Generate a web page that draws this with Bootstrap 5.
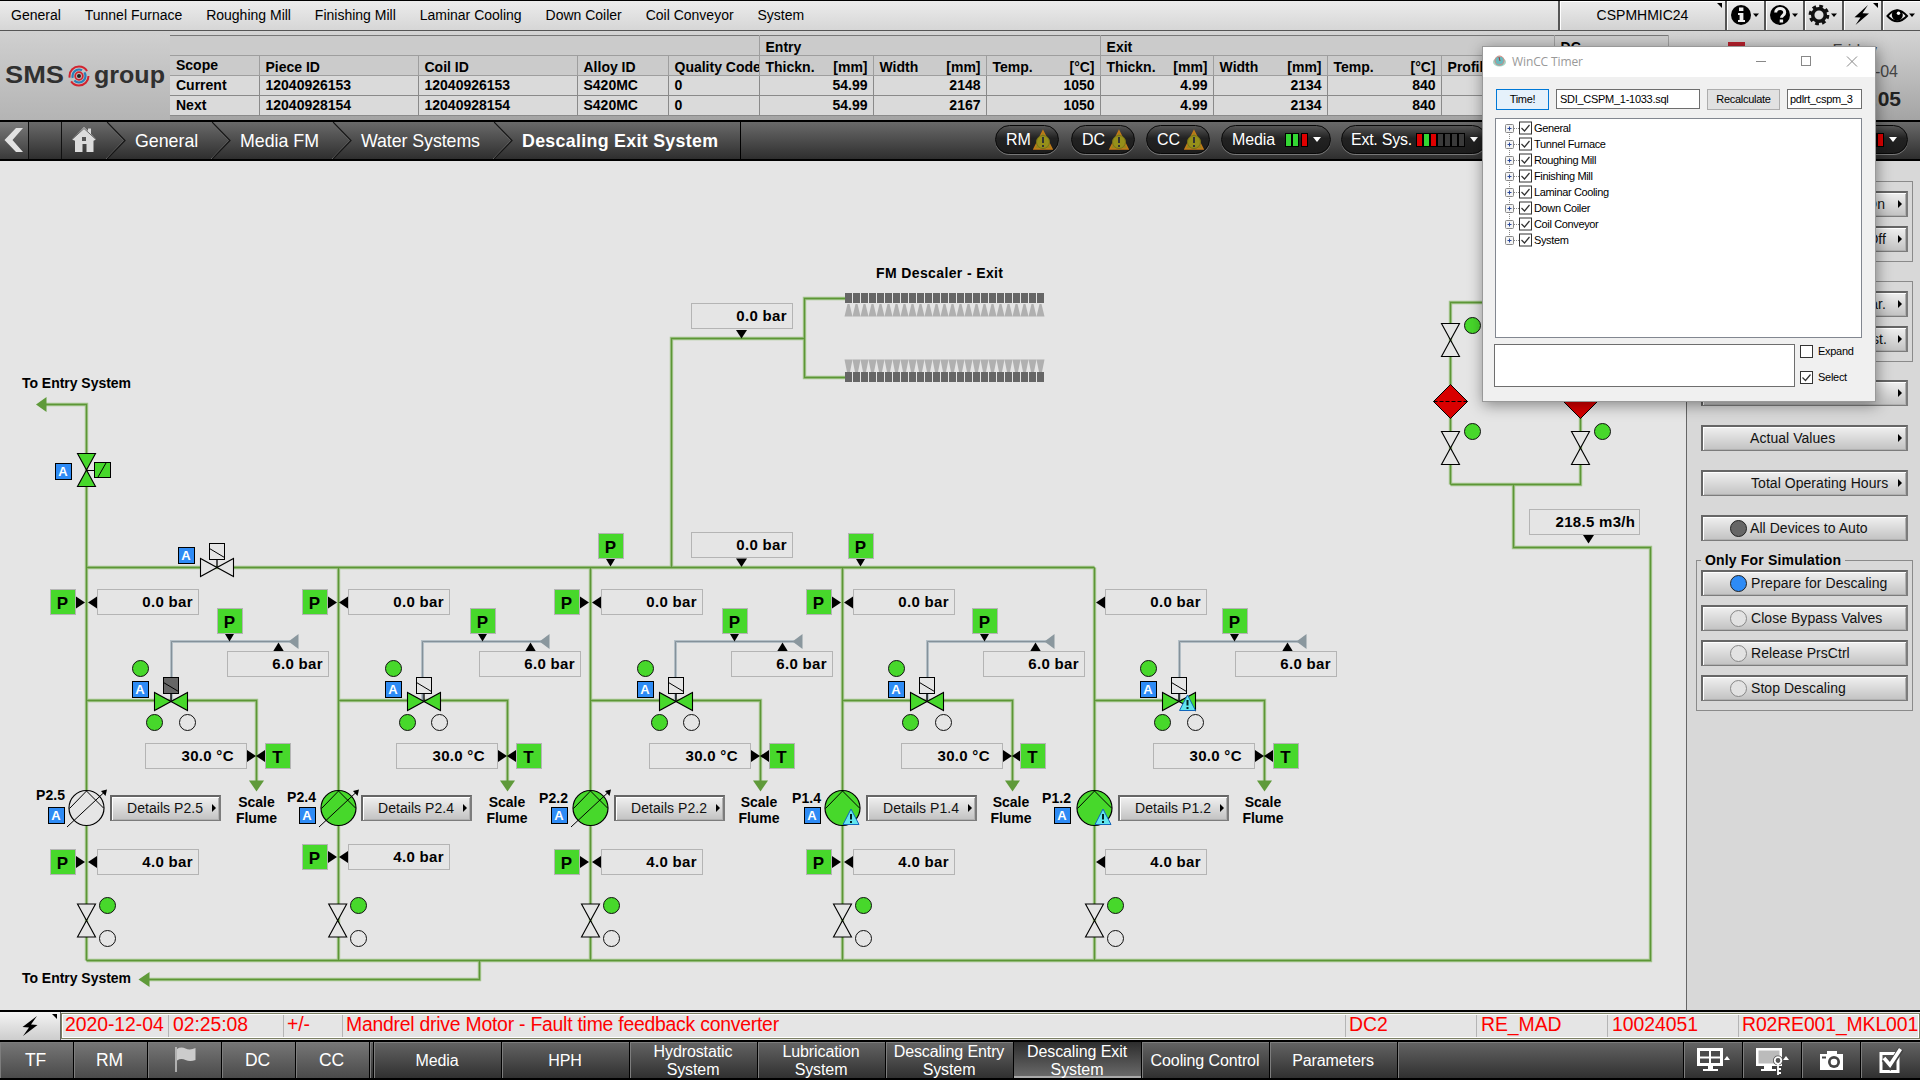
<!DOCTYPE html>
<html lang="en">
<head>
<meta charset="utf-8">
<title>Descaling Exit System</title>
<link href="https://cdn.jsdelivr.net/npm/bootstrap@5.3.0/dist/css/bootstrap.min.css" rel="stylesheet">
<style>
body{font-family:"Liberation Sans",Arial,sans-serif;font-size:14px;line-height:1;color:#000;background:#e5e5e5;cursor:default}
svg{display:block}
button{font-family:inherit}
.screen{width:1920px;height:1080px}
/* menu */
.menubar{height:31px;background:linear-gradient(#ececec,#d6d6d6);border-top:1px solid #000;border-bottom:1px solid #555}
.menubar .entries{padding:0 0 1px 11px;gap:23.9px}
.tool-cell{width:39px;border-left:2px solid #555;background:linear-gradient(#ececec,#d2d2d2);box-shadow:inset 1px 1px #fff}
.tool-cell.host{width:167px;padding-bottom:1px;letter-spacing:0}
.fold{top:2px;right:3px}
/* header */
.headband{height:89px;background:linear-gradient(#d4d4d4,#a4a4a4)}
.logo-box{width:170px;background:linear-gradient(#d0d0d0,#b4b4b4)}
.pdata{width:1498px;height:80px;margin-top:4px;table-layout:fixed;border-collapse:collapse;font-weight:700;background:#dadada}
.pdata td,.pdata th{height:20px;padding:0 5px 1px 6px;border:1px solid #8a8a8a;line-height:16px;white-space:nowrap;overflow:hidden;vertical-align:middle}
.pdata th{background:#cbcbcb;border-color:#9e9e9e;padding-top:3px;padding-bottom:0}
.pdata th.scope{padding-top:0;padding-bottom:1px}
.pdata tr:first-child th{border-top:1px solid #777}
.pdata td:first-child,.pdata th:first-child{border-left:0}
.clock{color:#444;font-size:16px;padding:12px 19px 0 0}
.clock .time{font-size:21px;color:#222}
.alert-mark{left:1728px;top:42px;width:17px;height:10px;background:#b5202c}
/* breadcrumb */
.crumbs{height:41px;background:linear-gradient(#6a6a6a,#2e2e2e);border-top:2px solid #000;border-bottom:2px solid #000;color:#fff}
.crumbs .back{width:29px;border-right:1px solid #111;background:linear-gradient(#7a7a7a,#3a3a3a)}
.crumbs .slot{width:33px;border-right:1px solid #111}
.crumbs .trail{width:679px;border-right:1px solid #000;font-size:17.8px}
.pill{height:29px;border:1.5px solid #080808;border-radius:15px;background:linear-gradient(#555,#222 45%,#1c1c1c);box-shadow:0 1px #777;font-size:16px;letter-spacing:-.1px}
.led{flex-shrink:0;width:7px;height:14px;border:1px solid #000;background:#333}
.led.off{border-color:#000;background:#3a3a3a}
.led.g{background:#33d633}.led.r{background:#e00000}
.caret{width:0;height:0;border:4px solid transparent;border-top:5px solid #fff;border-bottom:0}
/* workspace */
.process{width:1686px}
.process text{font-family:"Liberation Sans",Arial,sans-serif;font-weight:700;font-size:14px}
.process .num{font-size:15px;letter-spacing:.3px;text-anchor:end}
.hmi-btn{height:26px;border:1px solid #7c7c7c;border-top:2px solid #666;border-left:2px solid #666;border-right-width:2px;background:linear-gradient(#f0f0f0,#c2c2c2);box-shadow:inset 1px 1px #fff,inset -1px -1px #b0b0b0;font-size:14px;padding:0 0 1px;color:#111;letter-spacing:.05px}
.hmi-btn .go{width:0;height:0;border:4.5px solid transparent;border-left:4px solid #000;border-right:0}
.details{width:111px}
.side{width:234px;background:#d8d8d8;border-left:1px solid #666;padding:20px 7px 0 9px}
.grp{border:1px solid #8a8a8a;padding:9px 4px;position:relative;display:flex;flex-direction:column;gap:9px}
.grp .cap{top:-9px;left:4px;background:#d8d8d8;padding:0 4px;font-weight:700;letter-spacing:.17px;line-height:17px}
.solo{margin:0 5px 19px}
.bulb{width:17px;height:17px;border-radius:50%;border:1px solid #888;background:#e2e2e2;margin:0 4px 0 27px}
.lead-txt{padding-left:47px}
/* window */
.win{left:1482px;top:46px;width:394px;height:356px;background:#f0f0f0;border:1px solid #999;box-shadow:1px 3px 14px rgba(0,0,0,.42);font-size:11px;letter-spacing:-.28px}
.win .bar{height:30px;background:#fff;font-family:"Open Sans","Noto Sans",sans-serif;font-size:12px;color:#999;letter-spacing:0}
.win .fld{border:1px solid #6e6e6e;background:#fff;height:20px;padding-left:3px}
.win .b{border:1px solid #adadad;background:#e1e1e1;height:21px}
.win .b.on{border:1px solid #0078d7;background:#e5f1fb}
.tree{width:367px;height:220px;margin:8px 0 0 12px;background:#fff;border:1px solid #828790;padding:1px 0 0 9px}
.tree .node{height:16px;line-height:16px;letter-spacing:-.36px}
/* alarm + footer */
.alarm{height:30px;background:#e5e5e5;border-top:2px solid #000;color:#f00;font-size:19.4px;letter-spacing:-.05px}
.alarm .bolt{width:61px;background:linear-gradient(#f4f4f4,#cdcdcd);border-right:1px solid #666}
.alarm .row-box{border:1px solid #7b7f63;outline:1px solid #fff;outline-offset:-2px;margin-top:1px;height:26px}
.alarm .c{border-right:1px solid #b5b5b5;padding-left:4px;white-space:nowrap;overflow:hidden;line-height:21px}
.alarm .msg{letter-spacing:-.24px;padding-left:3px}
.foot{height:40px;background:linear-gradient(#646464,#303030);border-top:2px solid #000;border-bottom:2px solid #000;color:#fff;font-size:16px;line-height:17.5px}
.foot .t{border-right:1px solid #000;box-shadow:inset 1px 1px #7d7d7d;text-align:center;white-space:nowrap;letter-spacing:-.1px;padding:1px 1px 0 0}
.foot .area{width:74px;font-size:17.5px;background:linear-gradient(#777,#4a4a4a);padding:2px 2px 0 0}
.foot .page{width:128px}
.foot .sys{width:59px}
.foot .now{background:linear-gradient(#2d2d2d,#6c6c6c);box-shadow:inset 0 -2px #aaa}
</style>
<script src="https://cdn.jsdelivr.net/npm/bootstrap@5.3.0/dist/js/bootstrap.bundle.min.js"></script>
</head>
<body class="overflow-hidden">
<div class="screen d-flex flex-column position-relative overflow-hidden">

<nav class="menubar d-flex flex-shrink-0">
  <div class="entries d-flex align-items-center flex-grow-1"><span>General</span><span>Tunnel Furnace</span><span>Roughing Mill</span><span>Finishing Mill</span><span>Laminar Cooling</span><span>Down Coiler</span><span>Coil Conveyor</span><span>System</span></div>
  <div class="tool-cell host d-flex align-items-center justify-content-center position-relative">CSPMHMIC24<svg class="fold position-absolute" width="5" height="5"><path d="M0 0H5V5Z"/></svg></div>
  <div class="tool-cell"><svg width="37" height="29"><circle cx="14" cy="14" r="10"/><path d="M12 6.500h4.400v3.600H12zM11 12h5.400v7H18v2h-7v-2h1.600v-5H11z" fill="#eee"/><path d="M26 12.500h6l-3 3.500z"/></svg></div>
  <div class="tool-cell"><svg width="37" height="29"><circle cx="14" cy="14" r="10"/><path d="M9.700 11.500c0-5.500 9-5.500 9 0 0 3-3.200 2.800-3.200 5.300" fill="none" stroke="#eee" stroke-width="3"/><rect x="13.700" y="18.500" width="3.400" height="3" fill="#eee"/><path d="M26 12.500h6l-3 3.500z"/></svg></div>
  <div class="tool-cell"><svg width="37" height="29"><circle cx="14" cy="14" r="8.600" fill="none" stroke="#111" stroke-width="3.500" stroke-dasharray="3.600 3.150"/><circle cx="14" cy="14" r="6.300" fill="none" stroke="#111" stroke-width="3.500"/><path d="M26 12.500h6l-3 3.500z"/></svg></div>
  <div class="tool-cell position-relative"><svg width="37" height="29"><path d="M24 4L10.500 16.200l6 .3L11.500 24 25 12.500l-6.500-.3z"/></svg><svg class="fold position-absolute" width="5" height="5"><path d="M0 0H5V5Z"/></svg></div>
  <div class="tool-cell"><svg width="37" height="29"><path d="M4.500 15q9.500-11.500 19.500 0-10 10.500-19.500 0z" fill="#eee" stroke="#000" stroke-width="2"/><circle cx="14.300" cy="14" r="5.500"/><circle cx="15.500" cy="12.300" r="1.700" fill="#fff"/><path d="M26 12.500h6l-3 3.500z"/></svg></div>
</nav>

<header class="headband d-flex flex-shrink-0">
  <div class="logo-box flex-shrink-0"><svg width="170" height="89" font-family="Liberation Sans" font-weight="700" fill="#303030"><text x="5" y="52" font-size="23.500" textLength="59" lengthAdjust="spacingAndGlyphs">SMS</text><text x="94" y="52" font-size="23.500" textLength="71" lengthAdjust="spacingAndGlyphs">group</text>
  <g fill="none"><circle cx="79" cy="45" r="9.500" stroke="#d2232f" stroke-width="2" stroke-dasharray="24 4 26 6"/><circle cx="79" cy="45" r="6.500" stroke="#2a80b9" stroke-width="2.200" stroke-dasharray="15 3"/><circle cx="79" cy="45" r="3.800" stroke="#d2232f" stroke-width="1.800"/></g><circle cx="79" cy="45" r="2" fill="#222"/></svg></div>
  <table class="pdata flex-shrink-0">
    <colgroup><col style="width:89px"><col style="width:159px"><col style="width:159px"><col style="width:91px"><col style="width:91px"><col style="width:114px"><col style="width:113px"><col style="width:114px"><col style="width:113px"><col style="width:114px"><col style="width:114px"><col style="width:113px"><col style="width:114px"></colgroup>
    <tr><th colspan="5"></th><th colspan="3">Entry</th><th colspan="4">Exit</th><th>DC</th></tr>
    <tr><th class="scope">Scope</th><th>Piece ID</th><th>Coil ID</th><th>Alloy ID</th><th>Quality Code</th>
      <th><div class="d-flex justify-content-between"><span>Thickn.</span><span>[mm]</span></div></th><th><div class="d-flex justify-content-between"><span>Width</span><span>[mm]</span></div></th><th><div class="d-flex justify-content-between"><span>Temp.</span><span>[°C]</span></div></th>
      <th><div class="d-flex justify-content-between"><span>Thickn.</span><span>[mm]</span></div></th><th><div class="d-flex justify-content-between"><span>Width</span><span>[mm]</span></div></th><th><div class="d-flex justify-content-between"><span>Temp.</span><span>[°C]</span></div></th><th>Profile</th><th></th></tr>
    <tr><td>Current</td><td>12040926153</td><td>12040926153</td><td>S420MC</td><td>0</td><td class="text-end">54.99</td><td class="text-end">2148</td><td class="text-end">1050</td><td class="text-end">4.99</td><td class="text-end">2134</td><td class="text-end">840</td><td></td><td></td></tr>
    <tr><td>Next</td><td>12040928154</td><td>12040928154</td><td>S420MC</td><td>0</td><td class="text-end">54.99</td><td class="text-end">2167</td><td class="text-end">1050</td><td class="text-end">4.99</td><td class="text-end">2134</td><td class="text-end">840</td><td></td><td></td></tr>
  </table>
  <div class="clock flex-grow-1 text-end"><div class="alert-mark position-absolute"></div><div class="pe-4">Friday</div><div style="padding:5px 3px 0 0">2020-12-04</div><div class="time fw-bold mt-2">02:25:05</div></div>
</header>

<div class="crumbs d-flex flex-shrink-0">
  <div class="back"><svg width="29" height="37"><path d="M16 6h7L12.500 18 23 30h-7L4.500 18z" fill="#e2e2e2"/></svg></div>
  <div class="slot"></div>
  <div class="trail"><svg width="678" height="37" fill="#fff"><path d="M10 17.500L22 5l4 4V6.500h3V12l5 5.500-2.500 1.200V30h-7v-8h-4v8H13V18.800z" fill="#dcdcdc"/><path d="M10 17.500L22 6.500 34 17.500" fill="none" stroke="#666"/><rect x="20" y="15" width="4" height="4" fill="#555"/>
    <g fill="none" stroke="#777"><path d="M44 0L62 18.500 44 37M149 0l18 18.500L149 37M270 0l18 18.500L270 37M431 0l18 18.500L431 37"/></g>
    <g fill="none" stroke="#151515" stroke-width="1.200"><path d="M45 0L63 18.500 45 37M150 0l18 18.500L150 37M271 0l18 18.500L271 37M432 0l18 18.500L432 37"/></g>
    <text x="73" y="25">General</text><text x="178" y="25">Media FM</text><text x="299" y="25" textLength="119">Water Systems</text><text x="460" y="25" font-weight="700" textLength="196">Descaling Exit System</text></svg></div>
  <div class="d-flex flex-grow-1 ps-0" style="padding:3px 12px 0 0">
    <div class="pill d-flex align-items-center warnpill" style="margin-left:254px;width:64px">RM</div>
    <div class="pill d-flex align-items-center warnpill" style="margin-left:12px;width:64px">DC</div>
    <div class="pill d-flex align-items-center warnpill" style="margin-left:11px;width:64px">CC</div>
    <div class="pill d-flex align-items-center" style="margin-left:11px;width:110px;padding-left:10px"><span class="me-auto">Media</span><i class="led g"></i><i class="led g"></i><i class="led r" style="margin-left:2px"></i><i class="caret" style="margin:0 9px 0 5px"></i></div>
    <div class="pill d-flex align-items-center" style="margin-left:10px;width:146px;padding-left:9px;letter-spacing:-.25px"><span class="me-auto">Ext. Sys.</span><i class="led r"></i><i class="led g"></i><i class="led r"></i><i class="led off"></i><i class="led off"></i><i class="led off"></i><i class="led off"></i><i class="caret" style="margin:0 8px 0 5px"></i></div>
    <div class="pill d-flex align-items-center ms-auto" style="width:120px"><i class="led r ms-auto"></i><i class="led r"></i><i class="led r"></i><i class="caret" style="margin:0 10px 0 5px"></i></div>
  </div>
</div>

<main class="d-flex flex-grow-1">
  <section class="process position-relative" id="process"></section>
  <aside class="side">
    <div class="grp" style="margin-bottom:19px">
      <button class="hmi-btn d-flex align-items-center"><span class="ms-auto" style="margin-right:13px">On</span><i class="go me-1"></i></button>
      <button class="hmi-btn d-flex align-items-center"><span class="ms-auto" style="margin-right:12px">Off</span><i class="go me-1"></i></button>
    </div>
    <div class="grp" style="margin-bottom:18px">
      <button class="hmi-btn d-flex align-items-center"><span class="ms-auto" style="margin-right:12px">Par.</span><i class="go me-1"></i></button>
      <button class="hmi-btn d-flex align-items-center"><span class="ms-auto" style="margin-right:11px">Est.</span><i class="go me-1"></i></button>
    </div>
    <div class="solo"><button class="hmi-btn w-100 d-flex align-items-center"><i class="go ms-auto me-1"></i></button></div>
    <div class="solo"><button class="hmi-btn w-100 d-flex align-items-center lead-txt">Actual Values<i class="go ms-auto me-1"></i></button></div>
    <div class="solo"><button class="hmi-btn w-100 d-flex align-items-center lead-txt"><span style="margin-left:1px">Total Operating Hours</span><i class="go ms-auto me-1"></i></button></div>
    <div class="solo"><button class="hmi-btn w-100 d-flex align-items-center"><i class="bulb" style="background:#666;border-color:#222;margin-right:3px"></i>All Devices to Auto</button></div>
    <div class="grp"><div class="cap position-absolute">Only For Simulation</div>
      <button class="hmi-btn d-flex align-items-center"><i class="bulb" style="background:#2e8bf5;border-color:#222"></i>Prepare for Descaling</button>
      <button class="hmi-btn d-flex align-items-center"><i class="bulb"></i>Close Bypass Valves</button>
      <button class="hmi-btn d-flex align-items-center"><i class="bulb"></i>Release PrsCtrl</button>
      <button class="hmi-btn d-flex align-items-center"><i class="bulb"></i>Stop Descaling</button>
    </div>
  </aside>
</main>

<div class="alarm d-flex flex-shrink-0">
  <div class="bolt position-relative"><svg width="60" height="28"><path d="M37 4L22.500 15l6.500.5L23 24l14.500-11-6.500-.5z"/></svg><svg class="fold position-absolute" width="5" height="5"><path d="M0 0H5V5Z"/></svg></div>
  <div class="row-box d-flex flex-grow-1">
    <div class="c" style="width:107px;padding-left:3px">2020-12-04</div><div class="c" style="width:115px">02:25:08</div><div class="c" style="width:59px;padding-left:3px">+/-</div><div class="c msg" style="width:1003px">Mandrel drive Motor - Fault time feedback converter</div><div class="c" style="width:131px;padding-left:3px">DC2</div><div class="c" style="width:131px">RE_MAD</div><div class="c" style="width:131px">10024051</div><div class="c flex-fill border-0" style="width:180px;padding-left:3px;letter-spacing:-.12px">R02RE001_MKL001</div>
  </div>
</div>

<footer class="foot d-flex flex-shrink-0">
  <div class="t area d-flex align-items-center justify-content-center">TF</div><div class="t area d-flex align-items-center justify-content-center">RM</div>
  <div class="t area pt-0"><svg width="73" height="36"><path d="M28 5v25" stroke="#ccc" stroke-width="1.500"/><path d="M29 7q4-2.500 8.500-.5t10-.5v12q-5.500 2-10 0t-8.500.5z" fill="#ccc"/></svg></div>
  <div class="t area d-flex align-items-center justify-content-center">DC</div><div class="t area d-flex align-items-center justify-content-center">CC</div>
  <div class="t" style="width:4px"></div>
  <div class="t page d-flex align-items-center justify-content-center">Media</div><div class="t page d-flex align-items-center justify-content-center">HPH</div><div class="t page d-flex align-items-center justify-content-center">Hydrostatic<br>System</div><div class="t page d-flex align-items-center justify-content-center">Lubrication<br>System</div><div class="t page d-flex align-items-center justify-content-center">Descaling Entry<br>System</div><div class="t page now d-flex align-items-center justify-content-center">Descaling Exit<br>System</div><div class="t page d-flex align-items-center justify-content-center">Cooling Control</div><div class="t page d-flex align-items-center justify-content-center">Parameters</div>
  <div class="t flex-grow-1"></div>
  <div class="t sys"><svg width="58" height="36"><path d="M13 5h26v18H13z" fill="#fff"/><path d="M16 8h9v5.500h-9zM27 8h9v5.500h-9zM16 15.500h9V20h-9zM27 15.500h9V20h-9z" fill="#4a4a4a"/><path d="M24 23h5v3h5v2H19v-2h5zM40 17l3-4 3 4z" fill="#fff"/></svg></div>
  <div class="t sys"><svg width="58" height="36"><path d="M13 5h26v18H13z" fill="#fff"/><path d="M15.500 7.500h21v13h-21z" fill="#bbb"/><path d="M21 23h8v3h4v2H18v-2h3zM40 17l3-4 3 4z" fill="#fff"/><circle cx="35" cy="17.500" r="5" fill="#555"/><g fill="none" stroke="#fff" stroke-width="1.800"><circle cx="35" cy="17.500" r="3.300" fill="#555"/><path d="M35 21v11M35 26h3M35 30h3"/></g></svg></div>
  <div class="t sys"><svg width="58" height="36"><path d="M18 11h7V8h10v3h6v16H18z" fill="#fff"/><circle cx="32" cy="19" r="6" fill="#444"/><circle cx="32" cy="19" r="3.300" fill="#fff"/><path d="M20 13.500h4v2h-4z" fill="#444"/></svg></div>
  <div class="t sys border-0"><svg width="58" height="36"><path d="M20 10.500h17v18H20z" fill="none" stroke="#fff" stroke-width="3"/><path d="M23 16l6 7L40 6" fill="none" stroke="#444" stroke-width="6"/><path d="M23 15l6 7L39.500 6" fill="none" stroke="#fff" stroke-width="3.600"/></svg></div>
</footer>

<!-- floating tool window -->
<div class="win position-absolute">
  <div class="bar d-flex align-items-center"><svg width="392" height="30"><ellipse cx="16.500" cy="15" rx="6.500" ry="4.500" fill="#a9d3c4"/><circle cx="16.500" cy="14" r="4.800" fill="#69b9bd"/><circle cx="16.500" cy="13.500" r="4.500" fill="none" stroke="#d98a80"/><path d="M16 10l1 4" stroke="#a33"/><text x="29" y="18.500" fill="#999" textLength="71">WinCC Timer</text><g fill="none" stroke="#888"><path d="M273 14.500h10M364 9.500l10 10M374 9.500l-10 10"/><rect x="318.500" y="9.500" width="9" height="9"/></g></svg></div>
  <div class="d-flex" style="padding:12px 0 0 13px">
    <div class="b on d-flex align-items-center justify-content-center" style="width:53px">Time!</div><div class="fld d-flex align-items-center" style="width:144px;margin-left:7px">SDI_CSPM_1-1033.sql</div><div class="b d-flex align-items-center justify-content-center" style="width:73px;margin-left:7px">Recalculate</div><div class="fld d-flex align-items-center" style="width:75px;margin-left:7px;padding-left:2px">pdlrt_cspm_3</div>
  </div>
  <div class="tree" id="tree"></div>
  <div class="d-flex" style="padding:6px 0 0 11px">
    <div class="fld" style="width:301px;height:43px"></div>
    <div style="margin-left:5px">
      <div class="d-flex align-items-center" style="height:15px"><svg width="13" height="13"><rect x=".5" y=".5" width="12" height="12" fill="#fff" stroke="#333"/></svg><span style="margin-left:5px">Expand</span></div>
      <div class="d-flex align-items-center" style="height:15px;margin-top:11px"><svg width="13" height="13"><rect x=".5" y=".5" width="12" height="12" fill="#fff" stroke="#333"/><path d="M2.500 6.500l3 3 5-6" fill="none" stroke="#333" stroke-width="1.200"/></svg><span style="margin-left:5px">Select</span></div>
    </div>
  </div>
</div>
</div>

<script>
// warning triangles of the area pills
document.querySelectorAll('.warnpill').forEach(p=>{p.style.paddingLeft='10px';p.insertAdjacentHTML('beforeend','<svg class="ms-auto" style="margin-right:5px" width="20" height="22"><path d="M10 2L19 20H1Z" fill="#96861a" stroke="#c27a18" stroke-width="1.500"/><circle cx="10" cy="13" r="6.500" fill="#96901a" stroke="#777018" stroke-width="1"/><path d="M10 8v6M10 16v2" stroke="#333" stroke-width="2"/></svg>')});
// device tree
document.getElementById('tree').innerHTML=['General','Tunnel Furnace','Roughing Mill','Finishing Mill','Laminar Cooling','Down Coiler','Coil Conveyor','System'].map((n,i)=>`<div class="node d-flex align-items-center"><svg width="29" height="16"><path d="M4.500 ${i?0:8}V${i<7?16:8}M9 8.500h5" stroke="#888" stroke-dasharray="1 1"/><rect x=".5" y="4.500" width="8" height="8" rx="1" fill="#f4f4f4" stroke="#888"/><path d="M2.500 8.500h4M4.500 6.500v4" stroke="#2a489a"/><rect x="14.500" y="2" width="12" height="12" fill="#fff" stroke="#333"/><path d="M16.500 8l3 3 5-6" fill="none" stroke="#333" stroke-width="1.200"/></svg>${n}</div>`).join('');

// process picture, drawn in screen coordinates
const G='#47d82b';let s='',pipes=[],html='';
const pipe=d=>pipes.push(d);
const val=(x,y,t,w=102,r=6.5)=>{s+=`<rect x="${x+.5}" y="${y+.5}" width="${w-1}" height="25" fill="#e5e5e5" stroke="#b4b4b4"/><text class="num" x="${x+w-r+.3}" y="${y+18}">${t}</text>`};
const box=(x,y,t)=>{s+=`<rect x="${x+.5}" y="${y+.5}" width="25" height="25" fill="${G}" stroke="#b4b4b4"/><text x="${x+12.5}" y="${y+19.500}" text-anchor="middle" style="font-size:17px">${t}</text>`};
const auto=(x,y)=>{s+=`<rect x="${x+.5}" y="${y+.5}" width="16" height="16" fill="#2e8bf5" stroke="#000"/><text x="${x+8}" y="${y+13}" text-anchor="middle" fill="#fff" style="font-size:13px">A</text>`};
const dot=(x,y,f)=>{s+=`<circle cx="${x}" cy="${y}" r="8" fill="${f?G:'#e5e5e5'}" stroke="#111"/>`};
const poly=(p,f='#000',k='')=>{s+=`<polygon points="${p}" fill="${f}" ${k}/>`};
const dn=(x,y,w=5.5,h=8.5)=>poly(`${x-w},${y} ${x+w},${y} ${x},${y+h}`);
const up=(x,y)=>poly(`${x-5.5},${y} ${x+5.5},${y} ${x},${y-9}`);
const rt=(x,y)=>poly(`${x},${y-6} ${x},${y+6} ${x+9},${y}`);
const lt=(x,y)=>poly(`${x},${y-6} ${x},${y+6} ${x-9},${y}`);
const vValve=(x,y,f='#e5e5e5')=>poly(`${x-9},${y-16.5} ${x+9},${y-16.5} ${x-9},${y+16.5} ${x+9},${y+16.5}`,f,'stroke="#000" stroke-width="1.100"');
const hValve=(x,y,f='#e5e5e5')=>poly(`${x-16.5},${y-9} ${x-16.5},${y+9} ${x+16.5},${y-9} ${x+16.5},${y+9}`,f,'stroke="#000" stroke-width="1.100"');
const coil=(x,y,f)=>{s+=`<path d="M${x} ${y+16}v8" stroke="#000" stroke-width="1.300"/><rect x="${x-7.5}" y="${y}" width="15" height="16" fill="${f}" stroke="#000"/><path d="M${x-7.5} ${y+5}l15 9" stroke="#000"/>`};
const warn=(x,y)=>{s+=`<path d="M${x} ${y}l8 15.500h-16z" fill="#62e6ee" stroke="#1166bb"/><path d="M${x} ${y+5}v5.500M${x} ${y+12}v2" stroke="#022" stroke-width="2"/>`};

[['P2.5',86.5],['P2.4',338.5],['P2.2',590.5],['P1.4',842.5],['P1.2',1094.5]].forEach(([n,X],i)=>{
  const b=X-.5,k=i==1?1:0,o=(i==1||i==2)?1:0,last=i==4,q=[0,1,1,0,2][i],f=i?1.5:0;
  pipe(`M${X} ${i?567.5:486}V960.5`);pipe(`M${X} 700.5H${X+170-k}V782`);
  s+=`<path d="M${X+85-k} 701V641.500H${X+204}" fill="none" stroke="#b4bfc6" stroke-width="3"/><path d="M${X+85-k} 701V641.500H${X+204}" fill="none" stroke="#84919a"/>`;
  poly(`${X+202-k},641.5 ${X+212-k},634 ${X+212-k},649`,'#8a979e');
  poly(`${X+162.5-k},780.5 ${X+177.5-k},780.5 ${X+170-k},791.5`,'#5f9a3a');
  if(!last){box(b-36,589,'P');rt(b-10,602.5)}
  lt(b+11-k,602.5);val(b+11-k,589,'0.0 bar');
  const px=b+[131,132,132,130,128][i];box(px,608,'P');dn(px+12.5,634,4.5,7.5);
  up(X+192+(i>2?1:0),651.5);val(b+141,651,'6.0 bar');
  dot(X+54+o,668.5,1);auto(b+46+o,681);
  hValve(X+84.5+o,701.5,G);coil(X+84.5+o,677.5,i?'#e5e5e5':'#666');
  dot(X+68+o,722.5,1);dot(X+101,722.5,0);
  if(last)warn(X+93,695);
  val(b+59-k,743,'30.0 °C',102,13.5);rt(b+161-k,756);lt(b+179-k,756);box(b+179-k-(i==3?1:0),743,'T');
  s+=`<circle cx="${X}" cy="808" r="17.500" fill="${i?G:'#e5e5e5'}" stroke="#000" stroke-width="1.200"/><path d="M${X-17} 808.500L${X} 791l17 17" fill="none" stroke="#000"/>`;
  if(i<3){s+=`<path d="M${X-19.5} 827L${X+18} 792" stroke="#000"/>`;poly(`${X+20.5},789.5 ${X+14.5},791 ${X+19},796`)}else warn(X+8.5,809);
  auto(b-38-q,807);
  s+=`<text x="${b-50-q}" y="${[800,802,803,803,803][i]}" textLength="29">${n}</text><text x="${X+170-f}" y="807" text-anchor="middle">Scale</text><text x="${X+170-f}" y="823" text-anchor="middle">Flume</text>`;
  const y2=i==1?844:849;
  if(!last){box(b-36,y2,'P');rt(b-10,y2+13)}
  lt(b+11-k,y2+13);val(b+11-k,y2,'4.0 bar');
  vValve(X-k*.8,920.5);dot(X+21-k,905.5,1);dot(X+21-k,938.5,0);
  html+=`<button class="hmi-btn details position-absolute d-flex align-items-center" style="left:${b+24-k}px;top:${795-161}px"><span style="margin-left:15px">Details ${n}</span><i class="go ms-auto" style="margin-right:3px"></i></button>`;
});
pipe('M46 404.500H86.500V486');pipe('M86.500 567.500H1094.500');pipe('M671.500 567.500V338.500H804.500');pipe('M846 298.500H804.500V377.500H846');
pipe('M86.500 960.500H1650.500V547.500H1513.500V484.500');pipe('M479.500 960.500V979.500H149');
pipe('M1450.500 484.500V302.500H1580.500V484.500H1450.500');
poly('36,404.5 46.5,397 46.5,412','#5f9a3a');poly('138.5,979.5 149.5,972 149.5,987','#5f9a3a');
s+='<text x="22" y="388" textLength="109">To Entry System</text><text x="22" y="983" textLength="109">To Entry System</text><text x="876" y="278" textLength="127">FM Descaler - Exit</text>';
vValve(86.5,470,G);s+=`<path d="M87 470.500h8" stroke="#000"/><rect x="94.500" y="462.500" width="16" height="15" fill="${G}" stroke="#000"/><path d="M98 477l8-14" stroke="#000"/>`;
auto(55,463);auto(178,547);hValve(217,567.5);coil(217,543.5,'#e5e5e5');
val(691,303,'0.0 bar');dn(741.5,330);val(691,532,'0.0 bar');dn(741.5,558.5);
box(598,533,'P');dn(610.5,559,4.5,7.5);box(848,533,'P');dn(860.5,559,4.5,7.5);
for(let i=0;i<25;i++){const x=845+8*i;s+=`<path d="M${x} 293h7v10h-7zM${x} 372h7v10h-7z" fill="#666"/><path d="M${x+2.5} 304h2l3 12.500h-8zM${x-.5} 359.500h8l-2.500 12.500h-3z" fill="#b0b0b0"/>`}
[1450.5,1580.5].forEach(x=>{vValve(x,340);dot(x+22,325.5,1);poly(`${x-17},401.5 ${x},384.5 ${x+17},401.5 ${x},418.5`,'#d80000','stroke="#000"');s+=`<path d="M${x-17} 401.500h34" stroke="#000" stroke-dasharray="4 2"/>`;vValve(x,448);dot(x+22,431.5,1)});
val(1529,509,'218.5 m3/h',111,5);dn(1588.5,535);
const P=pipes.map(d=>`<path d="${d}"/>`).join('');
document.getElementById('process').innerHTML=`<svg width="1686" height="848" viewBox="0 161 1686 848"><g fill="none" stroke="#a3c58c" stroke-width="3.400">${P}</g><g fill="none" stroke="#5c9636" stroke-width="1.300">${P}</g>${s}</svg>${html}`;
</script>
</body>
</html>
